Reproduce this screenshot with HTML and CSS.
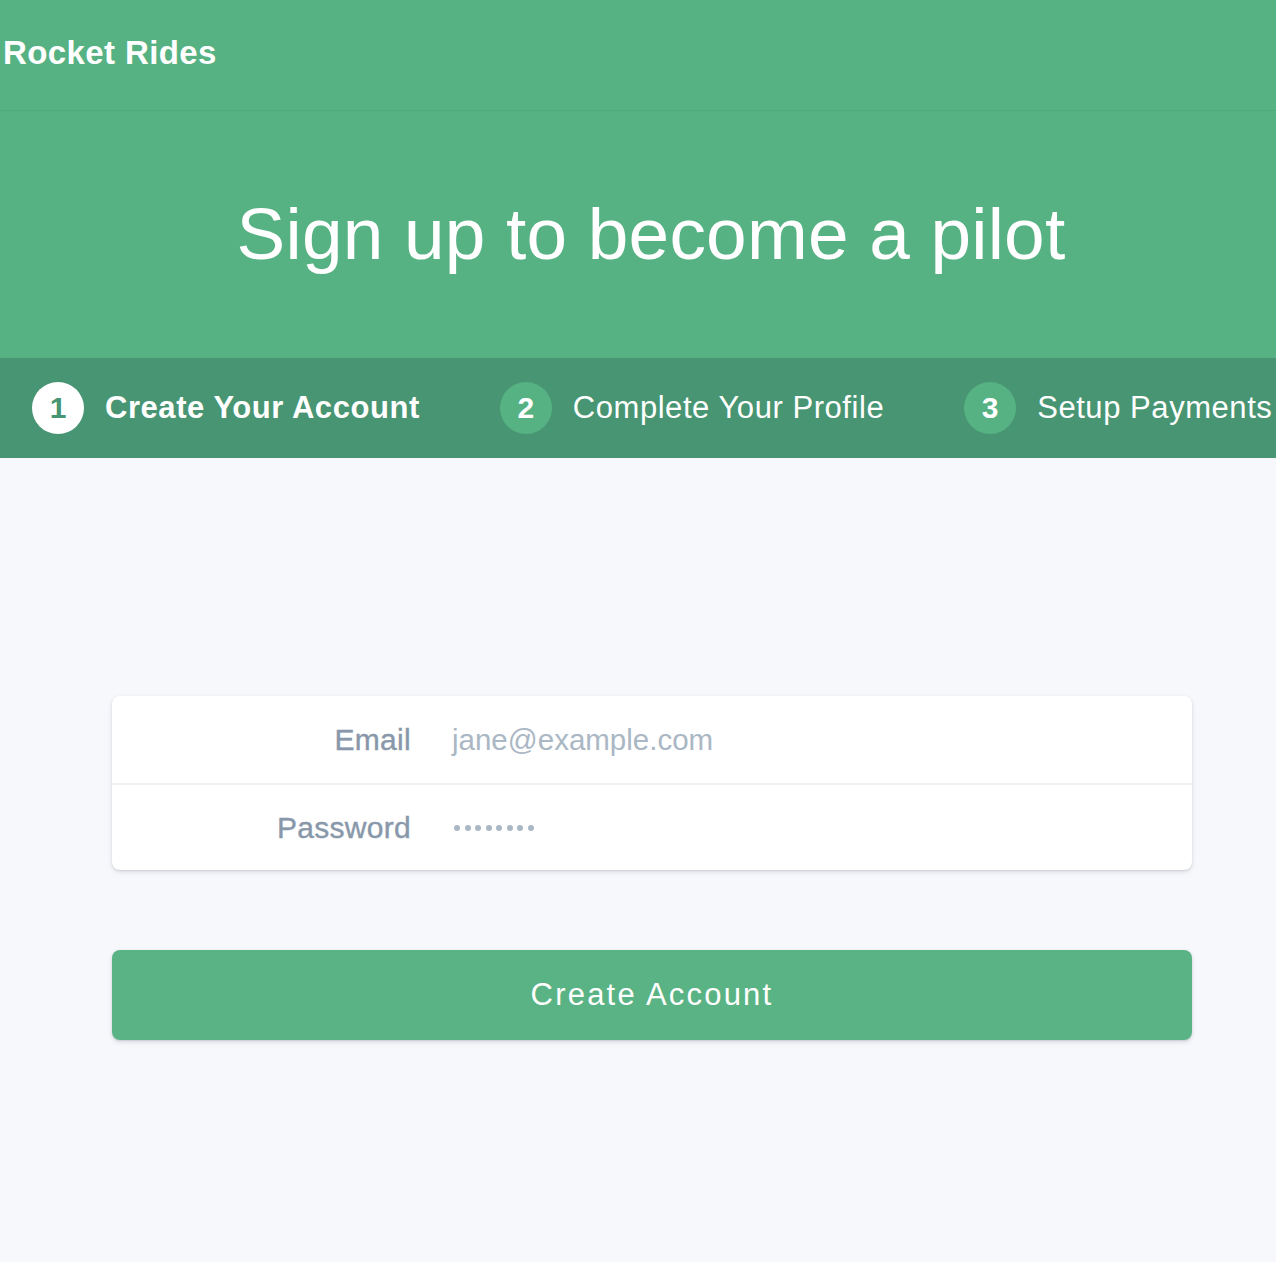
FILE: index.html
```html
<!DOCTYPE html>
<html>
<head>
<meta charset="utf-8">
<link rel="stylesheet" href="styles.css">
</head>
<body>
<header class="topbar">
  <div class="brand">Rocket Rides</div>
</header>
<section class="hero">
  <h1 class="hero-title">Sign up to become a pilot</h1>
</section>
<nav class="steps">
  <div class="step active"><span class="num">1</span><span class="label">Create Your Account</span></div>
  <div class="step"><span class="num">2</span><span class="label">Complete Your Profile</span></div>
  <div class="step"><span class="num">3</span><span class="label">Setup Payments</span></div>
</nav>
<main class="content">
  <form class="card">
    <div class="row">
      <label class="field-label">Email</label>
      <span class="placeholder">jane@example.com</span>
    </div>
    <div class="row">
      <label class="field-label">Password</label>
      <span class="dots"><i></i><i></i><i></i><i></i><i></i><i></i><i></i><i></i></span>
    </div>
  </form>
  <button class="submit" type="button">Create Account</button>
</main>
</body>
</html>
```
FILE: styles.css
```css
* { box-sizing: border-box; }
html, body { margin: 0; padding: 0; }
body {
  font-family: "Liberation Sans", Arial, sans-serif;
  background: #f6f8fb;
  width: 1276px;
  min-height: 1262px;
  overflow: hidden;
}
.topbar {
  height: 111px;
  background: #56b283;
  border-bottom: 1px solid #4fa97b;
  padding: 34px 0 0 3px;
}
.brand {
  color: #fff;
  font-weight: 700;
  font-size: 33px;
  line-height: 38px;
  letter-spacing: 0.4px;
}
.hero {
  height: 247px;
  background: #56b283;
  display: flex;
  justify-content: center;
  padding-top: 91px;
}
.hero-title {
  margin: 0 0 0 26px;
  color: #fff;
  font-weight: 400;
  font-size: 73px;
  line-height: 64px;
  letter-spacing: 0.2px;
}
.steps {
  height: 100px;
  background: #479572;
  display: flex;
  align-items: center;
  padding-left: 32px;
  gap: 80px;
}
.step {
  display: flex;
  align-items: center;
  gap: 21px;
  color: #fff;
  white-space: nowrap;
}
.num {
  width: 52px;
  height: 52px;
  border-radius: 50%;
  background: #56b283;
  color: #fff;
  font-weight: 700;
  font-size: 30px;
  display: flex;
  align-items: center;
  justify-content: center;
}
.step.active .num {
  background: #fff;
  color: #479572;
}
.label {
  font-size: 31px;
  letter-spacing: 0.55px;
  line-height: 40px;
}
.step.active .label {
  font-weight: 700;
  font-size: 31px;
  letter-spacing: 0.55px;
}
.content {
  padding: 238px 84px 0 112px;
}
.card {
  margin: 0;
  width: 1080px;
  background: #fff;
  border-radius: 8px;
  box-shadow: 0 2px 5px rgba(50, 50, 93, 0.12), 0 1px 2px rgba(0, 0, 0, 0.1);
}
.row {
  height: 87px;
  display: grid;
  grid-template-columns: 299px 1fr;
  column-gap: 41px;
  align-items: center;
}
.row + .row {
  border-top: 2px solid #eef0f3;
  height: 87px;
}
.field-label {
  text-align: right;
  color: #8898aa;
  font-size: 30px;
  font-weight: 400;
  letter-spacing: 0.3px;
  -webkit-text-stroke: 0.4px #8898aa;
}
.placeholder {
  color: #aab7c4;
  font-size: 29.5px;
  letter-spacing: 0;
}
.dots {
  display: flex;
  gap: 4.5px;
  padding-left: 2px;
}
.dots i {
  display: block;
  width: 6px;
  height: 6px;
  border-radius: 50%;
  background: #aab7c4;
}
.submit {
  display: block;
  margin-top: 80px;
  width: 1080px;
  height: 90px;
  border: none;
  border-radius: 8px;
  background: #5ab384;
  color: #fff;
  font-family: "Liberation Sans", Arial, sans-serif;
  font-size: 31px;
  letter-spacing: 2.2px;
  box-shadow: 0 2px 5px rgba(50, 50, 93, 0.14), 0 1px 2px rgba(0, 0, 0, 0.1);
  padding: 0;
}
```
